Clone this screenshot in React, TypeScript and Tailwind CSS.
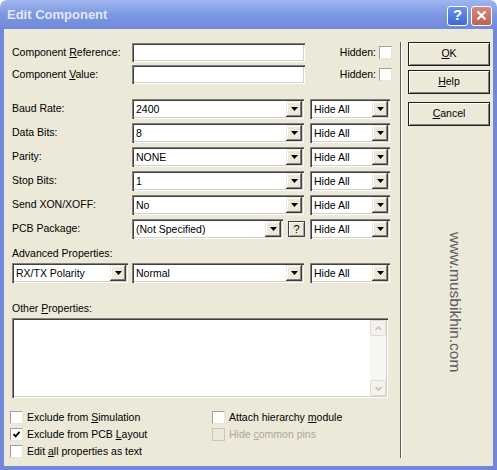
import React from 'react';

const ui = "font-['Liberation_Sans',Arial,sans-serif] text-[10.5px] text-black";
const sunken =
  'bg-white shadow-[inset_1px_1px_0_#808080,inset_2px_2px_0_#404040,inset_-1px_-1px_0_#ffffff,inset_-2px_-2px_0_#d4d0c8]';
const raised =
  'bg-[#ece9d8] shadow-[inset_-1px_-1px_0_#404040,inset_1px_1px_0_#ece9d8,inset_-2px_-2px_0_#808080,inset_2px_2px_0_#ffffff]';

function Arrow() {
  return (
    <svg width="7" height="4" viewBox="0 0 7 4">
      <path d="M0 0h7L3.5 4z" fill="#000" />
    </svg>
  );
}

function Combo({ value, w }: { value: string; w: string }) {
  return (
    <div className={`${w} h-[20px] flex p-[2px] ${sunken}`}>
      <div className="flex-1 pl-[2px] leading-[16px] whitespace-nowrap overflow-hidden">{value}</div>
      <div className={`w-[16px] flex items-center justify-center ${raised}`}>
        <Arrow />
      </div>
    </div>
  );
}

function Check({ checked, disabled }: { checked?: boolean; disabled?: boolean }) {
  return (
    <span
      className={`w-[13px] h-[13px] shrink-0 border flex items-center justify-center ${
        disabled
          ? 'bg-[#ece9d8] border-[#cac7b8]'
          : 'bg-white border-t-[#a0a0a0] border-l-[#a0a0a0] border-b-[#e4e4e4] border-r-[#e4e4e4]'
      }`}
    >
      {checked && (
        <svg width="9" height="9" viewBox="0 0 9 9">
          <polyline points="1.5,4.2 3.6,6.4 7.6,1.8" fill="none" stroke="#000" strokeWidth="1.8" />
        </svg>
      )}
    </span>
  );
}

function Btn({ children, mt }: { children: React.ReactNode; mt: string }) {
  return (
    <div
      className={`${mt} w-[82px] h-[24px] border border-[#1f1f1f] bg-[#ece9d8] shadow-[inset_1px_1px_0_#ffffff,inset_-1px_-1px_0_#808080] flex items-center justify-center`}
    >
      {children}
    </div>
  );
}

function Row({ label, children, mt }: { label: React.ReactNode; children: React.ReactNode; mt: string }) {
  return (
    <div className={`${mt} flex items-center`}>
      <span className="w-[120px]">{label}</span>
      {children}
    </div>
  );
}

function ScrollBtn({ up }: { up?: boolean }) {
  return (
    <div className="h-[16px] rounded-[2px] border border-[#dedcd2] bg-[#f3f2ec] flex items-center justify-center">
      <svg width="7" height="5" viewBox="0 0 7 5">
        <polyline
          points={up ? '0.5,4 3.5,1 6.5,4' : '0.5,1 3.5,4 6.5,1'}
          fill="none"
          stroke="#c2c0b6"
          strokeWidth="1.5"
        />
      </svg>
    </div>
  );
}

export default function App() {
  const serial = [
    { label: 'Baud Rate:', value: '2400' },
    { label: 'Data Bits:', value: '8' },
    { label: 'Parity:', value: 'NONE' },
    { label: 'Stop Bits:', value: '1' },
    { label: 'Send XON/XOFF:', value: 'No' },
  ];

  return (
    <div className={`w-[497px] h-[470px] flex flex-col bg-white ${ui}`}>
      {/* title bar */}
      <div className="h-[29px] rounded-t-[7px] bg-linear-to-b from-[#a0b6ef] via-[#7c98e2] to-[#7089da] flex items-center pl-[7px] pr-[5px]">
        <span className="flex-1 font-bold text-[13px] text-[#e2e8f8] pt-[1px]">Edit Component</span>
        <div className="flex gap-[3px] pt-[2px]">
          <div className="w-[21px] h-[20px] rounded-[3px] border border-white bg-linear-to-b from-[#6a92ec] to-[#3e69d6] flex items-center justify-center text-white font-bold text-[15px]">
            ?
          </div>
          <div className="w-[21px] h-[20px] rounded-[3px] border border-white bg-linear-to-b from-[#d68a80] to-[#c05f55] flex items-center justify-center">
            <svg width="11" height="11" viewBox="0 0 11 11">
              <path d="M1.5 1.5l8 8M9.5 1.5l-8 8" stroke="#fff" strokeWidth="2.2" />
            </svg>
          </div>
        </div>
      </div>

      <div className="flex-1 flex bg-[#ece9d8] border-x-4 border-b-4 border-[#7187d8]">
        {/* left panel */}
        <div className="w-[396px] flex flex-col pl-[8px] pt-[14px]">
          <div className="flex items-center h-[19px]">
            <span className="w-[120px]">
              Component <u>R</u>eference:
            </span>
            <div className={`w-[173px] h-[19px] ${sunken}`} />
            <span className="w-[71px] text-right">Hidden:</span>
            <span className="ml-[3px]">
              <Check />
            </span>
          </div>
          <div className="mt-[3px] flex items-center h-[19px]">
            <span className="w-[120px]">
              Component <u>V</u>alue:
            </span>
            <div className={`w-[173px] h-[19px] ${sunken}`} />
            <span className="w-[71px] text-right">Hidden:</span>
            <span className="ml-[3px]">
              <Check />
            </span>
          </div>

          {serial.map((r, i) => (
            <Row key={r.label} label={r.label} mt={i === 0 ? 'mt-[15px]' : 'mt-[4px]'}>
              <Combo value={r.value} w="w-[172px]" />
              <div className="ml-[6px]">
                <Combo value="Hide All" w="w-[80px]" />
              </div>
            </Row>
          ))}
          <Row label="PCB Package:" mt="mt-[4px]">
            <Combo value="(Not Specified)" w="w-[151px]" />
            <div className="ml-[5px] w-[17px] h-[16px] border border-[#404040] bg-[#ece9d8] shadow-[inset_1px_1px_0_#ffffff,inset_-1px_-1px_0_#a0a0a0] flex items-center justify-center text-[11px]">
              ?
            </div>
            <div className="ml-[5px]">
              <Combo value="Hide All" w="w-[80px]" />
            </div>
          </Row>

          <div className="mt-[7px] h-[14px] leading-[14px]">Advanced Properties:</div>
          <div className="mt-[3px] flex">
            <Combo value="RX/TX Polarity" w="w-[116px]" />
            <div className="ml-[4px]">
              <Combo value="Normal" w="w-[172px]" />
            </div>
            <div className="ml-[6px]">
              <Combo value="Hide All" w="w-[80px]" />
            </div>
          </div>

          <div className="mt-[18px] h-[14px] leading-[14px]">
            Other <u>P</u>roperties:
          </div>
          <div className={`mt-[3px] w-[376px] h-[80px] p-[2px] flex justify-end ${sunken}`}>
            <div className="w-[16px] flex flex-col bg-[#f7f6f2]">
              <ScrollBtn up />
              <div className="flex-1" />
              <ScrollBtn />
            </div>
          </div>

          <div className="mt-[11px] -ml-[2px] flex">
            <div className="w-[202px] flex flex-col">
              <div className="h-[17px] flex items-center gap-[4px]">
                <Check />
                <span>
                  Exclude from <u>S</u>imulation
                </span>
              </div>
              <div className="h-[17px] flex items-center gap-[4px]">
                <Check checked />
                <span>
                  Exclude from PCB <u>L</u>ayout
                </span>
              </div>
              <div className="h-[17px] flex items-center gap-[4px]">
                <Check />
                <span>
                  Edit <u>a</u>ll properties as text
                </span>
              </div>
            </div>
            <div className="flex flex-col">
              <div className="h-[17px] flex items-center gap-[4px]">
                <Check />
                <span>
                  Attach hierarchy <u>m</u>odule
                </span>
              </div>
              <div className="h-[17px] flex items-center gap-[4px] text-[#aca899]">
                <Check disabled />
                <span>
                  Hide <u>c</u>ommon pins
                </span>
              </div>
            </div>
          </div>
        </div>

        {/* separator */}
        <div className="mt-[13px] mb-[8px] w-[2px] border-l border-l-[#5e5e5e] border-r border-r-white" />

        {/* right panel */}
        <div className="flex-1 flex flex-col pl-[6px] pt-[13px]">
          <Btn mt="mt-0">
            <u>O</u>K
          </Btn>
          <Btn mt="mt-[4px]">
            <u>H</u>elp
          </Btn>
          <Btn mt="mt-[8px]">
            <u>C</u>ancel
          </Btn>
          <div className="mt-[106px] ml-[39px] self-start [writing-mode:vertical-rl] text-[15.5px] leading-[16px] text-[#5c5c5c]">
            www.musbikhin.com
          </div>
        </div>
      </div>
    </div>
  );
}
